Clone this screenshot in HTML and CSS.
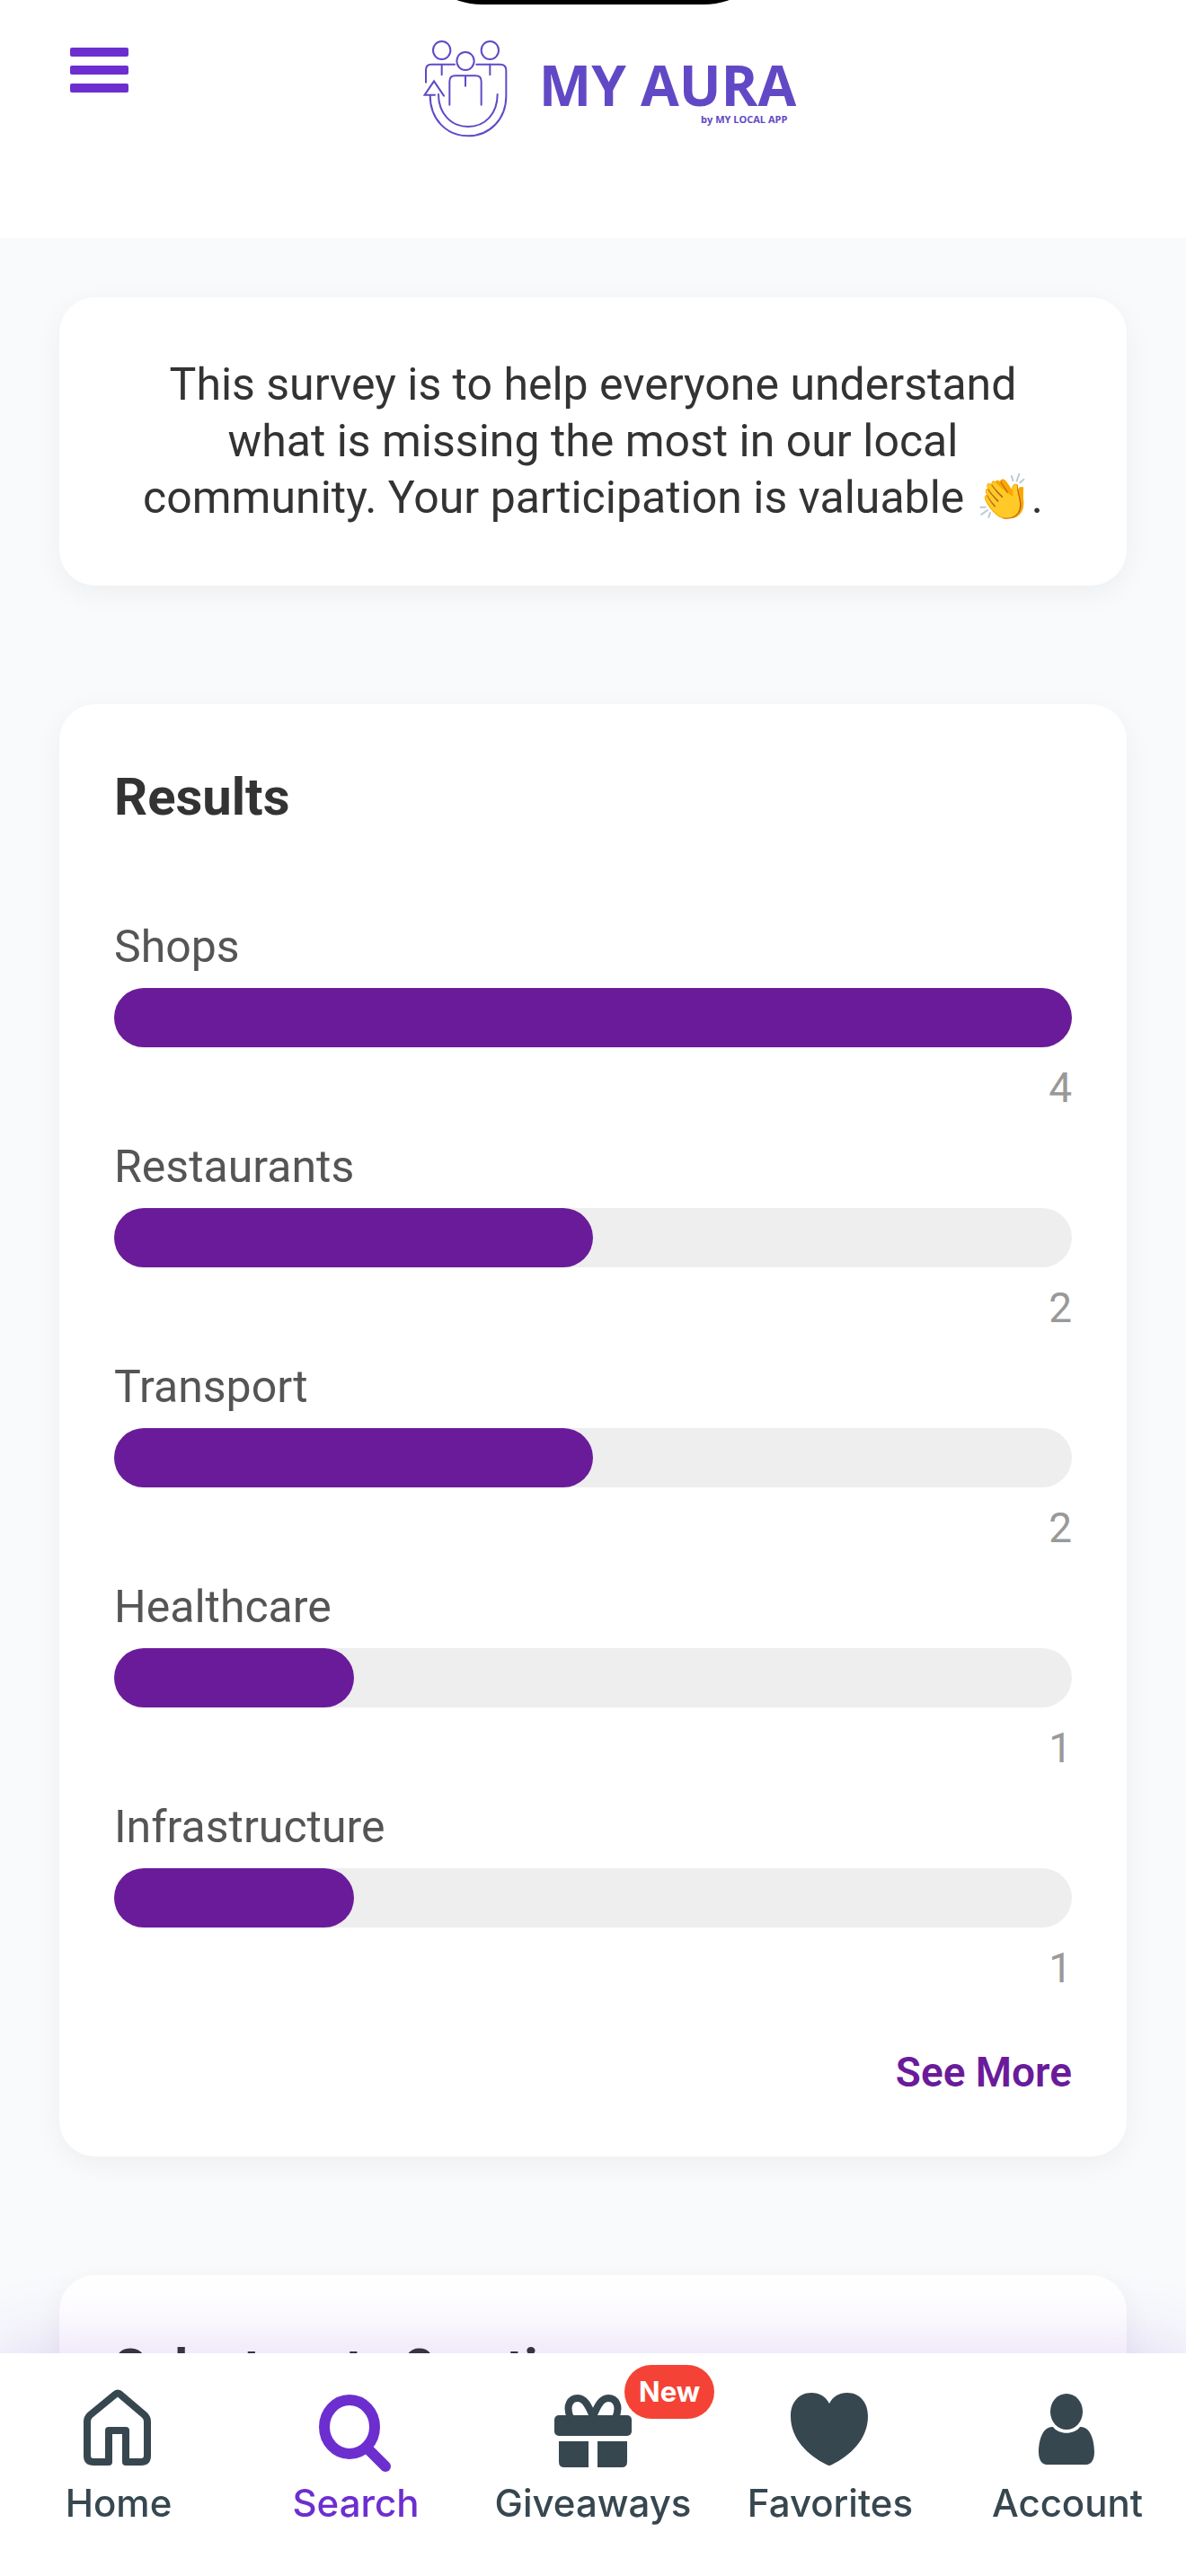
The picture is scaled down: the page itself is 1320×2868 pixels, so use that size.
FILE: index.html
```html
<!DOCTYPE html>
<html lang="en">
<head>
  <meta charset="UTF-8">
  <meta name="viewport" content="width=device-width, initial-scale=1.0">
  <title>My Aura - Survey</title>
  <link rel="stylesheet" href="styles.css">
</head>
<body>

<header class="header">
  <button class="menu-btn" aria-label="Menu">
    <svg viewBox="0 0 65 50">
      <rect width="65" height="10" rx="2"/>
      <rect y="20" width="65" height="10" rx="2"/>
      <rect y="40" width="65" height="10" rx="2"/>
    </svg>
  </button>
  <a class="logo" href="#">
    <svg class="logo-icon" viewBox="93 132 285 327">
      <ellipse cx="155" cy="168" rx="29" ry="30"/>
      <ellipse cx="316" cy="168" rx="29" ry="30"/>
      <ellipse cx="234" cy="204" rx="29" ry="30"/>
      <path d="M102 275V234Q102 215 120 215H198M155 215V250"/>
      <path d="M271 215H350Q370 215 370 235V320C370 398 315 454 243 454C170 454 116 398 116 318"/>
      <path d="M316 215V250"/>
      <path d="M144 315C144 380 187 423 243 423C300 423 341 380 341 315"/>
      <path d="M132 317H98L129 271L162 320"/>
      <path d="M181 350V272Q181 253 200 253H268Q287 253 287 272V350M234 253V287"/>
    </svg>
    <span class="logo-text">
      <span class="logo-name">MY AURA</span>
      <span class="logo-by">by MY LOCAL APP</span>
    </span>
  </a>
</header>

<main class="content">
  <section class="card intro">
    <p>This survey is to help everyone understand what is missing the most in our local community. Your participation is valuable 👏.</p>
  </section>

  <section class="card">
    <h2>Results</h2>
    <ul class="results">
      <li>
        <span class="label">Shops</span>
        <div class="bar"><div class="fill" style="width: 100%"></div></div>
        <span class="count">4</span>
      </li>
      <li>
        <span class="label">Restaurants</span>
        <div class="bar"><div class="fill" style="width: 50%"></div></div>
        <span class="count">2</span>
      </li>
      <li>
        <span class="label">Transport</span>
        <div class="bar"><div class="fill" style="width: 50%"></div></div>
        <span class="count">2</span>
      </li>
      <li>
        <span class="label">Healthcare</span>
        <div class="bar"><div class="fill" style="width: 25%"></div></div>
        <span class="count">1</span>
      </li>
      <li>
        <span class="label">Infrastructure</span>
        <div class="bar"><div class="fill" style="width: 25%"></div></div>
        <span class="count">1</span>
      </li>
    </ul>
    <button class="see-more">See More</button>
  </section>

  <section class="card">
    <h2>Select up to 3 options</h2>
  </section>
</main>

<!-- Bottom navigation -->
<nav class="tabs">
  <a href="#">
    <svg viewBox="0 0 96 96">
      <path class="line" d="M44 10L16 33Q13 36 13 40V78Q13 85 20 85H37V50H56V85H73Q80 85 80 78V40Q80 36 77 33L50 10Q47 7 44 10Z"/>
    </svg>
    Home
  </a>
  <a href="#" class="active">
    <svg viewBox="0 0 96 96">
      <ellipse class="ring" cx="41" cy="46" rx="28" ry="30"/>
      <path class="handle" d="M62 71L81 90"/>
    </svg>
    Search
  </a>
  <a href="#">
    <svg viewBox="0 0 96 96">
      <path class="line" d="M23 36C17 22 23 14 31 14C40 14 44 26 48 34C52 26 56 14 65 14C73 14 79 22 73 36"/>
      <rect x="5" y="33" width="86" height="23" rx="5"/>
      <path d="M10 62H43V91H16Q10 91 10 85ZM53 62H86V85Q86 91 80 91H53Z"/>
    </svg>
    Giveaways
    <span class="badge">New</span>
  </a>
  <a href="#">
    <svg viewBox="0 0 96 96">
      <path d="M47 20C43 12 36 8 27 8C13 8 4 19 4 34C4 60 24 78 44 88Q47 90 50 88C70 78 90 60 90 34C90 19 81 8 67 8C58 8 51 12 47 20Z"/>
    </svg>
    Favorites
  </a>
  <a href="#">
    <svg viewBox="0 0 96 96">
      <ellipse cx="47" cy="29" rx="18" ry="20"/>
      <path d="M32 46C38 55 56 55 62 46C73 45 78 60 78 74C78 83 74 88 69 88H25C20 88 16 83 16 74C16 60 21 45 32 46Z"/>
    </svg>
    Account
  </a>
</nav>

</body>
</html>
```
FILE: styles.css
```css
* {
  box-sizing: border-box;
}

body {
  margin: 0;
  background-color: #f8fafc;
  font-family: Roboto, 'Liberation Sans', sans-serif;
  color: #333;
}

button {
  border: none;
  padding: 0;
  background: none;
  font-family: inherit;
  cursor: pointer;
}

.header {
  position: relative;
  display: grid;
  grid-template-columns: 1fr auto 1fr;
  align-items: start;
  padding: 44px 78px 112px;
  background-color: #fff;
  overflow: hidden;
}

/* camera cutout */
.header::before {
  content: '';
  position: absolute;
  top: -107px;
  left: calc(50% - 193px);
  width: 386px;
  height: 112px;
  border-radius: 70px / 56px;
  background-color: #000;
}

.menu-btn {
  justify-self: start;
  padding-top: 9px;
}

.menu-btn svg {
  display: block;
  width: 65px;
  fill: #6d2ecf;
}

.logo {
  display: flex;
  gap: 34px;
  padding-left: 37px;
  color: #6149c6;
  text-decoration: none;
  font-family: 'Open Sans', sans-serif;
  font-weight: 700;
}

.logo-icon {
  width: 95px;
  height: 109px;
  fill: none;
  stroke: #6149c6;
  stroke-width: 6;
  stroke-linecap: round;
}

.logo-text {
  display: flex;
  flex-direction: column;
  padding-top: 19px;
}

.logo-name {
  font-size: 62px;
  line-height: 62px;
}

.logo-by {
  padding-right: 10px;
  font-size: 11px;
  line-height: 16px;
  text-align: right;
}

.content {
  display: flex;
  flex-direction: column;
  gap: 132px;
  padding: 66px 66px 120px;
}

.card {
  padding: 61px;
  border-radius: 40px;
  background-color: #fff;
  box-shadow: 0 8px 32px rgba(0, 0, 0, 0.05);
}

.intro {
  padding: 66px 80px;
  font-size: 50px;
  line-height: 63px;
  text-align: center;
}

.intro p {
  margin: 0;
}

.card h2 {
  margin: 0;
  font-size: 58px;
  font-weight: 700;
  line-height: 84px;
}

.results {
  display: flex;
  flex-direction: column;
  gap: 28px;
  margin: 93px 0 55px;
  padding: 0;
  list-style: none;
}

.label,
.count {
  display: block;
}

.label {
  color: #555;
  font-size: 50px;
  line-height: 64px;
}

.bar {
  height: 66px;
  margin: 14px 0 17px;
  border-radius: 33px;
  background-color: #eee;
}

.fill {
  height: 100%;
  border-radius: 33px;
  background-color: #6a1b9a;
}

.count {
  color: #999;
  font-size: 46px;
  line-height: 56px;
  text-align: right;
}

.see-more {
  display: block;
  margin-left: auto;
  color: #6a1b9a;
  font-size: 46px;
  font-weight: 600;
  line-height: 66px;
}

.tabs {
  position: fixed;
  bottom: 0;
  left: 0;
  right: 0;
  display: grid;
  grid-template-columns: repeat(5, 1fr);
  padding: 36px 0 55px;
  background-color: #fff;
  box-shadow: 0 0 80px rgba(109, 46, 207, 0.2);
}

.tabs a {
  position: relative;
  display: flex;
  flex-direction: column;
  align-items: center;
  gap: 9px;
  color: #37474f;
  font-family: Inter, sans-serif;
  font-size: 42px;
  font-weight: 500;
  line-height: 52px;
  text-decoration: none;
}

.tabs svg {
  width: 96px;
  height: 96px;
  fill: currentColor;
}

.tabs .active {
  color: #6d2ecf;
}

.tabs .line,
.tabs .ring,
.tabs .handle {
  fill: none;
  stroke: currentColor;
  stroke-width: 8;
  stroke-linejoin: round;
}

.tabs .ring {
  stroke-width: 12;
}

.tabs .handle {
  stroke-width: 12;
  stroke-linecap: round;
}

.badge {
  position: absolute;
  top: -23px;
  left: calc(50% + 35px);
  padding: 0 16px;
  border-radius: 30px;
  background-color: #f44336;
  color: #fff;
  font-size: 31px;
  font-weight: 700;
  line-height: 60px;
}
```
